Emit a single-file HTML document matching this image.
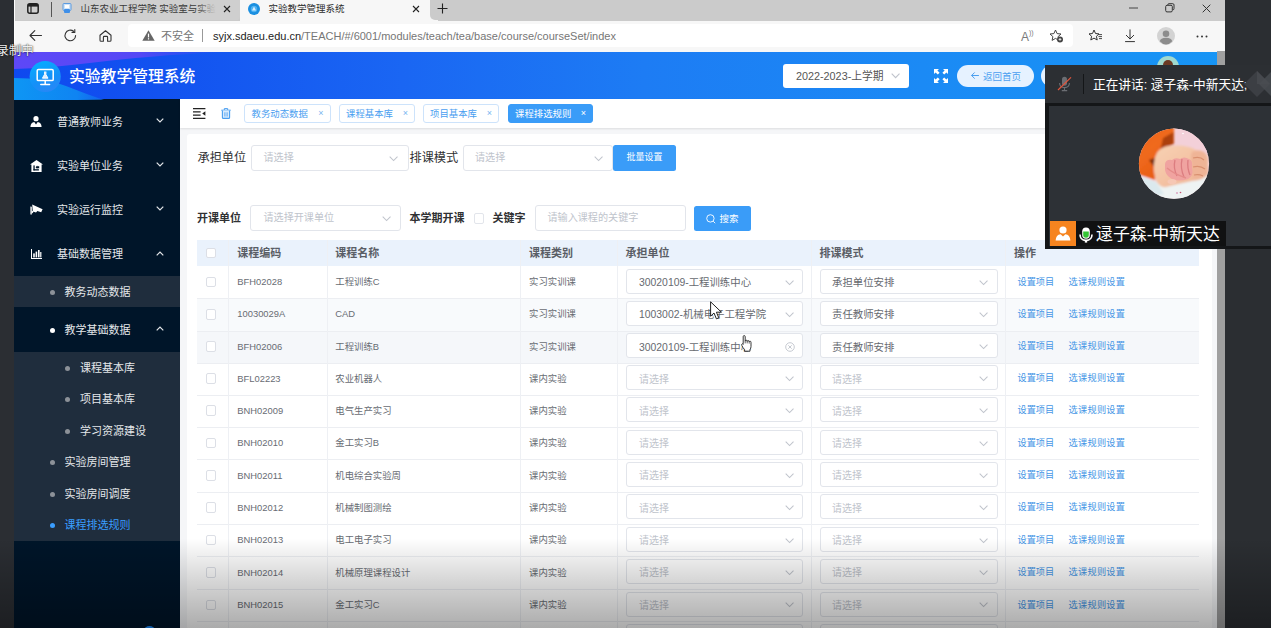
<!DOCTYPE html>
<html lang="zh-CN">
<head>
<meta charset="utf-8">
<title>实验教学管理系统</title>
<style>
*{box-sizing:border-box;margin:0;padding:0}
html,body{width:1271px;height:628px;overflow:hidden;background:#fff}
body{position:relative;font-family:"Liberation Sans","Noto Sans CJK SC",sans-serif;font-size:10px;color:#606266}
.abs{position:absolute}
#lstrip{left:0;top:0;width:14px;height:628px;background:#2b2b2d}
#rstrip{left:1225px;top:0;width:46px;height:628px;background:#2b2e32}
#tabbar{left:14px;top:0;width:1211px;height:20px;background:#cbcbcb}
#tab1{left:14px;top:0;width:225px;height:20px;background:#d4d4d4;border-radius:0 0 4px 0}
#tab2{left:239px;top:0;width:190.5px;height:21px;background:#f7f7f7;border-radius:4px 4px 0 0}
#addr{left:14px;top:20px;width:1211px;height:31px;background:#f7f7f7}
#url{left:128px;top:24px;width:945px;height:23px;background:#fff;border-radius:4px}
#hdr{left:14px;top:51px;width:1211px;height:48px;background:linear-gradient(90deg,#1f6cf6 0%,#1e78f4 45%,#1a8cf5 75%,#1795f5 100%)}
#side{left:14px;top:99px;width:166px;height:529px;background:#001529}
#main{left:180px;top:99px;width:1037px;height:529px;background:#f0f2f5}
#tabs{left:180px;top:99px;width:1037px;height:29px;background:#fff;box-shadow:0 1px 3px rgba(0,0,0,.12)}
#card{left:186px;top:133px;width:1025px;height:495px;background:#fff}
#scroll{left:1217px;top:51px;width:8px;height:577px;background:#a3a3a3}
#fade{left:0;top:538px;width:1271px;height:90px;background:linear-gradient(180deg,rgba(0,0,0,0) 0%,rgba(0,0,0,.17) 50%,rgba(0,0,0,.33) 100%);pointer-events:none}

.t{position:absolute;white-space:nowrap;line-height:1}
svg{position:absolute;overflow:visible}
#tabt1{left:80.5px;top:5px;font-size:9.5px;color:#3a3a3a;width:135px;overflow:hidden}
#tabt2{left:268.5px;top:5px;font-size:9.5px;color:#2a2a2a}
#unsafe{left:161px;top:30px;font-size:11px;color:#767676}
#urlt{left:213px;top:30px;font-size:11px;color:#767676}
#urlt b{font-weight:normal;color:#222}

#title{left:69px;top:67.5px;font-size:15.8px;color:#fff;font-weight:500;letter-spacing:0}
#sem{left:783px;top:63.5px;width:126px;height:24.5px;background:#fff;border-radius:3px}
#semt{left:796px;top:70px;font-size:10.5px;color:#555}
#back{left:957px;top:65px;width:77px;height:22px;border-radius:11px;background:#e6f2ff}
#backt{left:982px;top:71px;font-size:9.5px;color:#4a9ff0}
#pill2{left:1041px;top:65px;width:60px;height:22px;border-radius:11px;background:#e6f2ff}

#title{top:68.5px}
#hdr{background:linear-gradient(90deg,#1a58f2 0%,#1c6af4 30%,#1d7cf4 55%,#1a8cf5 78%,#1795f5 100%)}
.m{position:absolute;white-space:nowrap;line-height:1;font-size:11px;color:#e4e7ea;left:57px}
.m2{left:64.5px}.m3{left:80px}
.dot{position:absolute;width:4px;height:4px;border-radius:50%;background:#8c9198}
#sub1{left:14px;top:276px;width:166px;height:31px;background:#1f2d3d}
#sub2{left:14px;top:351.5px;width:166px;height:189px;background:#1f2d3d}

.dot{width:5px;height:5px;margin:-.2px 0 0 -.2px}
#tabs{top:98.5px;height:28.5px}
#card{left:186.5px;top:133.5px;border-radius:3px}
.tg{position:absolute;top:104.5px;height:18.5px;border:1px solid #cde3fb;border-radius:3px;background:#fff;font-size:9.4px;color:#4a9ef0;line-height:16.5px;padding-left:6.5px;white-space:nowrap}
.tg.on{background:#3a9cf8;border-color:#3a9cf8;color:#fff}
.tg i{position:absolute;right:6px;top:0;font-style:normal;font-size:9px;color:#7ab5f0}
.tg.on i{color:#fff}
.lb{position:absolute;white-space:nowrap;line-height:1;color:#303133}
.sel{position:absolute;border:1px solid #dcdfe6;border-radius:3px;background:#fff}
.ph{position:absolute;white-space:nowrap;line-height:1;color:#c0c4cc;font-size:10.1px;margin-top:-.3px}
.btn{position:absolute;background:#3a9cf8;border-radius:2.5px;color:#fff;font-size:9.5px;white-space:nowrap}

.sel{border-color:#e2e5eb}
#th{left:197px;top:239.5px;width:1002px;height:26.5px;background:#eaf2fc}
.row{position:absolute;left:197px;width:1002px;border-bottom:1px solid #ebeef5}
.vl{position:absolute;top:239.5px;width:1px;height:389px;background:#ebeef5}
.h{position:absolute;top:247px;white-space:nowrap;line-height:1;font-size:11px;font-weight:700;color:#5a5e66}
.c{position:absolute;white-space:nowrap;line-height:1;font-size:9.4px;color:#686c73}
.cb{position:absolute;left:205.5px;width:10.8px;height:10.8px;border:1px solid #dcdfe6;border-radius:2px;background:#fff}
.sv{margin-top:1.2px;position:absolute;white-space:nowrap;line-height:1;font-size:10.4px;color:#5c6066}
.lk{position:absolute;white-space:nowrap;line-height:1;font-size:9.2px;color:#4596e6}

#scroll{left:1217px;top:51px;width:8px;height:577px;background:#a0a0a0}
#mp{left:1045.3px;top:65px;width:226px;height:184px;background:#141618}
#mph{left:1045.3px;top:65px;width:226px;height:38px;background:#2c2f33}
#mpb{left:1049px;top:106.3px;width:222px;height:139.7px;background:#2d3136}
#mpt{left:1093px;top:79px;font-size:12.7px;color:#fff}
#nm{left:1050px;top:221px;width:175.5px;height:25px;background:#101112}
#nmo{left:1050px;top:221px;width:25.5px;height:25px;background:#f6841f}
#nmt{left:1096px;top:227px;font-size:16.9px;color:#fff}
#rec{left:-3px;top:45.5px;font-size:11.5px;color:#f2f2f2;text-shadow:0 0 2px rgba(0,0,0,.55)}

#hdr{top:51.5px;height:47.5px;background:linear-gradient(90deg,#0f49ef 0%,#1252f0 12%,#1a66f3 32%,#1d7cf4 52%,#1b8af5 75%,#1795f5 100%)}
#lstrip{background:#2b2e33;width:13.7px}
#rec{font-size:12px;left:-3.5px;top:45.5px;color:#ececec}
#wl{left:13.7px;top:0;width:1px;height:51px;background:#fdfdfd}

#tabt1,#tabt2{top:4px}
#unsafe,#urlt{top:31px}
#tab2{border-radius:0}
#tabr{left:429.5px;top:0;width:12px;height:20px;background:#cbcbcb;border-radius:0 0 0 5px}
#tabrb{left:429.5px;top:10px;width:8px;height:11px;background:#f7f7f7}

#tabbar{height:20.6px}#tab1{height:20.3px}#addr{top:20.6px;height:31px}
#semt{font-size:10.8px;top:70.8px}
#backt{left:983px;top:71.8px}
.row{border-bottom-color:#eef0f4}.vl{background:#eef0f4}

#main{background:#f5f6f8}
#tabs{height:29.5px;box-shadow:0 1px 2px rgba(0,0,0,.10)}

.h{top:248px}
.sv{color:#676a70}
.tg{top:104px;height:19px;line-height:17px}

#tab1{background:#cfcfcf;width:225.5px;border-radius:0 0 3px 0}
#tab2{left:239.5px;width:190px}

.row{border-bottom:none;border-top:1px solid #eceef2}

#th{height:26px}
.lk{margin-top:.5px}
.lk.l2{letter-spacing:.28px}

#rec{font-size:12.4px;left:-3.6px;top:45.4px;color:#f0f0f0;text-shadow:0 0 2px rgba(0,0,0,.75),0 0 1px rgba(0,0,0,.6)}
</style>
</head>
<body>
<div class="abs" id="tabbar"></div>
<div class="abs" id="tab1"></div>
<div class="abs" id="tab2"></div>
<div class="abs" id="addr"></div><div class="abs" id="tabrb"></div><div class="abs" id="tabr"></div>
<div class="abs" id="url"></div>
<div class="abs" id="hdr"></div>
<div class="abs" id="side"></div>
<div class="abs" id="main"></div>
<div class="abs" id="tabs"></div>
<div class="abs" id="card"></div>
<div class="abs" id="scroll"></div>

<!-- browser chrome -->
<svg style="left:27px;top:3px" width="12" height="11" viewBox="0 0 12 11"><rect x="0.8" y="0.8" width="10.4" height="9.4" rx="2" fill="none" stroke="#222" stroke-width="1.5"/><rect x="1" y="1" width="10" height="2.6" fill="#222"/><line x1="4" y1="3" x2="4" y2="10" stroke="#222" stroke-width="1.2"/></svg>
<div class="abs" style="left:51px;top:2px;width:1px;height:15px;background:#555"></div>
<svg style="left:62px;top:3px" width="10" height="11" viewBox="0 0 10 11"><rect x="1" y="0.5" width="8" height="7" rx="1" fill="#cfe3f7" stroke="#5b9be0" stroke-width="1"/><rect x="2" y="6" width="6" height="4" rx="1" fill="#3f8fe8"/><rect x="3" y="2" width="4" height="3" fill="#fff"/></svg>
<div class="t" id="tabt1">山东农业工程学院 实验室与实验</div>
<div class="abs" style="left:196px;top:2px;width:20px;height:16px;background:linear-gradient(90deg,rgba(207,207,207,0),#cfcfcf)"></div>
<svg style="left:223px;top:5px" width="8" height="8" viewBox="0 0 8 8"><path d="M1 1L7 7M7 1L1 7" stroke="#222" stroke-width="1.1" fill="none"/></svg>
<svg style="left:248px;top:3px" width="12" height="12" viewBox="0 0 12 12"><circle cx="6" cy="6" r="6" fill="#1b8fe0"/><circle cx="6" cy="6" r="3.2" fill="#4fb3f2"/><path d="M4 7.5L6 3.5L8 7.5Z" fill="#d9efff"/></svg>
<div class="t" id="tabt2">实验教学管理系统</div>
<svg style="left:412px;top:5px" width="8" height="8" viewBox="0 0 8 8"><path d="M1 1L7 7M7 1L1 7" stroke="#222" stroke-width="1.1" fill="none"/></svg>
<svg style="left:437px;top:3px" width="11" height="11" viewBox="0 0 11 11"><path d="M5.5 0.5V10.5M0.5 5.5H10.5" stroke="#222" stroke-width="1.1" fill="none"/></svg>
<!-- window buttons -->
<svg style="left:1129px;top:7px" width="10" height="2" viewBox="0 0 10 2"><path d="M0 1H9" stroke="#444" stroke-width="1"/></svg>
<svg style="left:1165px;top:3px" width="10" height="10" viewBox="0 0 10 10"><rect x="0.7" y="2.3" width="6.6" height="6.6" rx="1.3" fill="none" stroke="#333" stroke-width="1"/><path d="M2.8 2V1.8Q2.8 0.7 4 0.7H7.8Q9 0.7 9 1.9V5.6Q9 6.8 7.9 6.8" fill="none" stroke="#333" stroke-width="1"/></svg>
<svg style="left:1202px;top:4px" width="9" height="9" viewBox="0 0 9 9"><path d="M0.7 0.7L8.3 8.3M8.3 0.7L0.7 8.3" stroke="#333" stroke-width="1" fill="none"/></svg>
<!-- nav buttons -->
<svg style="left:29px;top:30.3px" width="13" height="11" viewBox="0 0 13 11"><path d="M12.5 5.5H1M5.8 0.7L1 5.5L5.8 10.3" stroke="#333" stroke-width="1.1" fill="none" stroke-linecap="round" stroke-linejoin="round"/></svg>
<svg style="left:64px;top:29px" width="13" height="13" viewBox="0 0 13 13"><path d="M11.6 6.5A5.3 5.3 0 1 1 9.6 2.3" stroke="#333" stroke-width="1.1" fill="none" stroke-linecap="round"/><path d="M10.8 0.6V3.4H8" stroke="#333" stroke-width="1.1" fill="none" stroke-linecap="round" stroke-linejoin="round"/></svg>
<svg style="left:99px;top:30px" width="13" height="12" viewBox="0 0 13 12"><path d="M1 5.2L6.5 0.7L12 5.2V10.2Q12 11.3 10.9 11.3H8.6V7.2Q8.6 6.4 7.8 6.4H5.2Q4.4 6.4 4.4 7.2V11.3H2.1Q1 11.3 1 10.2Z" stroke="#333" stroke-width="1.1" fill="none" stroke-linejoin="round"/></svg>
<svg style="left:142px;top:30px" width="13" height="11" viewBox="0 0 13 11"><path d="M6.5 0.3L12.7 10.7H0.3Z" fill="#666"/><rect x="5.9" y="3.6" width="1.2" height="3.8" fill="#fff"/><rect x="5.9" y="8.2" width="1.2" height="1.3" fill="#fff"/></svg>
<div class="t" id="unsafe">不安全</div>
<div class="abs" style="left:202px;top:29px;width:1px;height:13px;background:#999"></div>
<div class="t" id="urlt"><b>syjx.sdaeu.edu.cn</b>/TEACH/#/6001/modules/teach/tea/base/course/courseSet/index</div>
<!-- right addr icons -->
<div class="t" style="left:1021px;top:29px;font-size:12px;color:#7a7a7a">A<span style="font-size:7px;vertical-align:6px">))</span></div>
<svg style="left:1049px;top:29px" width="15" height="14" viewBox="0 0 15 14"><path d="M6.5 1L8.1 4.6L12 5L9.1 7.6L9.9 11.4L6.5 9.4L3.1 11.4L3.9 7.6L1 5L4.9 4.6Z" fill="none" stroke="#444" stroke-width="1" stroke-linejoin="round"/><circle cx="11" cy="10.4" r="3" fill="#444"/><path d="M9.6 10.4H12.4M11 9V11.8" stroke="#fff" stroke-width="0.8"/></svg>
<svg style="left:1088px;top:29px" width="15" height="13" viewBox="0 0 15 13"><path d="M6 1L7.5 4.5L11 4.9L8.4 7.3L9.2 11L6 9.1L2.8 11L3.6 7.3L1 4.9L4.5 4.5Z" fill="none" stroke="#333" stroke-width="1" stroke-linejoin="round"/><path d="M10.5 5.6H14M10.5 7.6H14M11 9.6H14" stroke="#333" stroke-width="0.9"/></svg>
<svg style="left:1125px;top:29px" width="10" height="14" viewBox="0 0 10 14"><path d="M5 0.8V9.8M1.3 6.3L5 10L8.7 6.3M0.5 12.6H9.5" fill="none" stroke="#333" stroke-width="1" stroke-linecap="round" stroke-linejoin="round"/></svg>
<svg style="left:1157px;top:27px" width="18" height="18" viewBox="0 0 18 18"><circle cx="9" cy="9" r="9" fill="#d3d3d3"/><circle cx="9" cy="6.7" r="3.3" fill="#8c8c8c"/><path d="M2.8 14.3Q3.4 10.8 9 10.8Q14.6 10.8 15.2 14.3Q12.7 17.4 9 17.4Q5.3 17.4 2.8 14.3Z" fill="#8c8c8c"/></svg>
<svg style="left:1196px;top:35px" width="12" height="3" viewBox="0 0 12 3"><circle cx="1.5" cy="1.5" r="1" fill="#333"/><circle cx="6" cy="1.5" r="1" fill="#333"/><circle cx="10.5" cy="1.5" r="1" fill="#333"/></svg>

<!-- app header -->
<svg style="left:14px;top:51.5px" width="300" height="48" viewBox="0 0 300 48">
<defs><linearGradient id="pg" x1="0" y1="0" x2="1" y2="0"><stop offset="0" stop-color="#5e48f7"/><stop offset="0.6" stop-color="#5548f5"/><stop offset="1" stop-color="#3a50f2" stop-opacity="0"/></linearGradient>
<linearGradient id="lg" x1="0" y1="0" x2="1" y2="0"><stop offset="0" stop-color="#0e96f4"/><stop offset="0.7" stop-color="#0f84f2"/><stop offset="1" stop-color="#1270f0" stop-opacity="0.6"/></linearGradient>
<linearGradient id="cg" x1="0.3" y1="0" x2="0.7" y2="1"><stop offset="0" stop-color="#06acff"/><stop offset="0.6" stop-color="#1590f8"/><stop offset="1" stop-color="#2a86f6"/></linearGradient></defs>
<path d="M0 0H210Q130 4 80 10.5Q35 16 0 17Z" fill="url(#pg)"/>
<path d="M0 26Q30 26 52 34Q72 42 90 48H0Z" fill="url(#lg)"/>
<circle cx="31.2" cy="24.5" r="15.6" fill="url(#cg)"/>
<rect x="23.2" y="17.6" width="16" height="11" rx="1.2" fill="none" stroke="#fff" stroke-width="1.5"/>
<path d="M31.2 28.6V31.8M26.8 32.4H35.6" stroke="#fff" stroke-width="1.5" fill="none" stroke-linecap="round"/>
<path d="M30 20H32.4M30.5 20.2V22.4L28.4 26.2H34L31.9 22.4V20.2" stroke="#fff" stroke-width="0.9" fill="#dff0ff" stroke-linejoin="round"/>
</svg>
<div class="t" id="title">实验教学管理系统</div>
<div class="abs" id="sem"></div>
<div class="t" id="semt">2022-2023-上学期</div>
<svg style="left:891.4px;top:72.7px" width="9.2" height="5.75" viewBox="0 0 8 5"><path d="M0.6 0.6L4 4L7.4 0.6" stroke="#c0c4cc" stroke-width="1" fill="none"/></svg>
<svg style="left:934px;top:69px" width="14" height="14" viewBox="0 0 14 14" fill="#fff"><path d="M0 0H5L3.4 1.6L5.6 3.8L3.8 5.6L1.6 3.4L0 5Z"/><path d="M14 0V5L12.4 3.4L10.2 5.6L8.4 3.8L10.6 1.6L9 0Z"/><path d="M0 14V9L1.6 10.6L3.8 8.4L5.6 10.2L3.4 12.4L5 14Z"/><path d="M14 14H9L10.6 12.4L8.4 10.2L10.2 8.4L12.4 10.6L14 9Z"/></svg>
<div class="abs" id="back"></div>
<svg style="left:971px;top:72px" width="8" height="7" viewBox="0 0 8 7"><path d="M7.5 3.5H0.8M3.4 0.7L0.6 3.5L3.4 6.3" stroke="#4a9ff0" stroke-width="1" fill="none" stroke-linecap="round" stroke-linejoin="round"/></svg>
<div class="t" id="backt">返回首页</div>
<div class="abs" id="pill2"></div>
<svg style="left:1157px;top:56px" width="22" height="22" viewBox="0 0 22 22"><circle cx="11" cy="11" r="11" fill="#9fd9cf"/><circle cx="11" cy="9" r="5" fill="#6b3a24"/><path d="M3 18Q5 13 11 13Q17 13 19 18Q16 22 11 22Q6 22 3 18Z" fill="#fff"/></svg>

<!-- sidebar -->
<div class="abs" id="sub1"></div>
<div class="abs" id="sub2"></div>
<svg style="left:29.5px;top:116px" width="12" height="11" viewBox="0 0 12 11" fill="#fff"><circle cx="6" cy="2.7" r="2.6"/><path d="M0.4 11Q0.6 6.3 4.3 5.9L6 8.6L7.7 5.9Q11.4 6.3 11.6 11Z"/></svg>
<div class="m" style="top:116.5px">普通教师业务</div>
<svg style="left:155.5px;top:117.5px" width="8" height="5" viewBox="0 0 8 5"><path d="M0.7 0.7L4 4L7.3 0.7" stroke="#e4e7ea" stroke-width="1.2" fill="none"/></svg>
<svg style="left:29.5px;top:160px" width="13" height="12" viewBox="0 0 13 12" fill="#fff"><path d="M6.5 0L13 4.6H11.6V12H1.4V4.6H0Z"/><rect x="3.4" y="5.4" width="1.3" height="5" fill="#001529"/><rect x="3.4" y="9.2" width="5.5" height="1.3" fill="#001529"/><path d="M9.2 6.2V8.2H7.2L7.2 9L5.6 7.2L7.2 5.4V6.2Z" fill="#001529"/></svg>
<div class="m" style="top:160.5px">实验单位业务</div>
<svg style="left:155.5px;top:161.5px" width="8" height="5" viewBox="0 0 8 5"><path d="M0.7 0.7L4 4L7.3 0.7" stroke="#e4e7ea" stroke-width="1.2" fill="none"/></svg>
<svg style="left:29.5px;top:204px" width="13" height="11" viewBox="0 0 13 11" fill="#fff"><path d="M2.2 0.4L12.6 5.2L11.2 8.2L7.4 6.9L6 8.6L2.8 7.4Z"/><path d="M0.4 2.4L1.8 2.8V10.6H0.4Z"/><path d="M1.6 6.6L3.6 7.6L2.6 9.2L1.6 9Z"/></svg>
<div class="m" style="top:204.5px">实验运行监控</div>
<svg style="left:155.5px;top:205.5px" width="8" height="5" viewBox="0 0 8 5"><path d="M0.7 0.7L4 4L7.3 0.7" stroke="#e4e7ea" stroke-width="1.2" fill="none"/></svg>
<svg style="left:30.5px;top:249px" width="11" height="10" viewBox="0 0 11 10" fill="#fff"><rect x="0" y="0" width="1" height="10"/><rect x="0" y="9" width="11" height="1"/><rect x="2.2" y="4.4" width="1.6" height="4"/><rect x="4.6" y="2.6" width="1.6" height="5.8"/><rect x="7" y="1" width="1.6" height="7.4"/><rect x="9.2" y="3" width="1.2" height="5.4"/></svg>
<div class="m" style="top:248.5px">基础数据管理</div>
<svg style="left:155.5px;top:250.5px" width="8" height="5" viewBox="0 0 8 5"><path d="M0.7 4.3L4 1L7.3 4.3" stroke="#e4e7ea" stroke-width="1.2" fill="none"/></svg>
<div class="dot" style="left:50px;top:290px"></div>
<div class="m m2" style="top:286.5px">教务动态数据</div>
<div class="dot" style="left:50px;top:328px;background:#fff"></div>
<div class="m m2" style="top:325px">教学基础数据</div>
<svg style="left:155.5px;top:325.5px" width="8" height="5" viewBox="0 0 8 5"><path d="M0.7 4.3L4 1L7.3 4.3" stroke="#e4e7ea" stroke-width="1.2" fill="none"/></svg>
<div class="dot" style="left:65.5px;top:366px"></div>
<div class="m m3" style="top:362.5px">课程基本库</div>
<div class="dot" style="left:65.5px;top:397.5px"></div>
<div class="m m3" style="top:394px">项目基本库</div>
<div class="dot" style="left:65.5px;top:429px"></div>
<div class="m m3" style="top:425.5px">学习资源建设</div>
<div class="dot" style="left:50px;top:460.5px"></div>
<div class="m m2" style="top:457px">实验房间管理</div>
<div class="dot" style="left:50px;top:492px"></div>
<div class="m m2" style="top:488.5px">实验房间调度</div>
<div class="dot" style="left:50px;top:523.5px;background:#3a9eff"></div>
<div class="m m2" style="top:520px;color:#3a9eff">课程排选规则</div>
<div class="abs" style="left:144px;top:625.5px;width:11px;height:8px;border-radius:50%;background:#1e8fff"></div>

<!-- tag tabs -->
<svg style="left:193px;top:108px" width="13" height="11" viewBox="0 0 13 11"><path d="M0 0.6H12.4M0 3.9H7.6M0 7.1H7.6M0 10.4H12.4" stroke="#222" stroke-width="1.1"/><path d="M12.4 3.2V7.8L9.2 5.5Z" fill="#222"/></svg>
<svg style="left:220.5px;top:108px" width="10" height="11" viewBox="0 0 10 11"><path d="M0.3 2.2H9.7M3.3 2V0.6H6.7V2" stroke="#4a9ef0" stroke-width="1" fill="none"/><path d="M1.4 2.4V9.4Q1.4 10.4 2.4 10.4H7.6Q8.6 10.4 8.6 9.4V2.4" stroke="#4a9ef0" stroke-width="1.1" fill="#d9ebfd"/><path d="M3.9 4.3V8.5M6.1 4.3V8.5" stroke="#4a9ef0" stroke-width="0.9"/></svg>
<div class="tg" style="left:244px;width:86.5px">教务动态数据<i>×</i></div>
<div class="tg" style="left:338.5px;width:76.5px">课程基本库<i>×</i></div>
<div class="tg" style="left:422.5px;width:76.5px">项目基本库<i>×</i></div>
<div class="tg on" style="left:507.5px;width:85.5px">课程排选规则<i>×</i></div>
<!-- filter row 1 -->
<div class="lb" style="left:197.5px;top:151.5px;font-size:12.2px">承担单位</div>
<div class="sel" style="left:251px;top:145px;width:157.5px;height:25.5px"></div>
<div class="ph" style="left:263.5px;top:153.5px">请选择</div>
<svg style="left:388.9px;top:155.7px" width="9.2" height="5.75" viewBox="0 0 8 5"><path d="M0.6 0.6L4 4L7.4 0.6" stroke="#c0c4cc" stroke-width="0.9" fill="none"/></svg>
<div class="lb" style="left:409.5px;top:151.5px;font-size:12.2px">排课模式</div>
<div class="sel" style="left:462.5px;top:145px;width:150px;height:25.5px"></div>
<div class="ph" style="left:475px;top:153.5px">请选择</div>
<svg style="left:594.4px;top:155.7px" width="9.2" height="5.75" viewBox="0 0 8 5"><path d="M0.6 0.6L4 4L7.4 0.6" stroke="#c0c4cc" stroke-width="0.9" fill="none"/></svg>
<div class="btn" style="left:613px;top:145px;width:63px;height:25.5px;line-height:25.5px;text-align:center;font-size:9px">批量设置</div>
<!-- filter row 2 -->
<div class="lb" style="left:197px;top:212.5px;font-size:11px;font-weight:700">开课单位</div>
<div class="sel" style="left:250px;top:205px;width:151px;height:26px"></div>
<div class="ph" style="left:263.5px;top:213.5px">请选择开课单位</div>
<svg style="left:382.4px;top:216.2px" width="9.2" height="5.75" viewBox="0 0 8 5"><path d="M0.6 0.6L4 4L7.4 0.6" stroke="#c0c4cc" stroke-width="0.9" fill="none"/></svg>
<div class="lb" style="left:409.5px;top:212.5px;font-size:11px;font-weight:700">本学期开课</div>
<div class="sel" style="left:473.5px;top:213px;width:10.5px;height:10.5px;border-radius:2px"></div>
<div class="lb" style="left:492.5px;top:212.5px;font-size:11px;font-weight:700">关键字</div>
<div class="sel" style="left:535px;top:205px;width:150.5px;height:26px"></div>
<div class="ph" style="left:547.5px;top:213.5px">请输入课程的关键字</div>
<div class="btn" style="left:693.5px;top:206px;width:57.5px;height:25px"></div>
<svg style="left:706px;top:213.5px" width="10" height="10" viewBox="0 0 10 10"><circle cx="4.4" cy="4.4" r="3.7" fill="none" stroke="#fff" stroke-width="0.9"/><path d="M7.2 7.2L9.2 9.2" stroke="#fff" stroke-width="0.9"/></svg>
<div class="lb" style="left:719.5px;top:213.5px;font-size:9.5px;color:#fff">搜索</div>
<!-- table -->
<div class="abs" id="th"></div>
<div class="row" style="top:265.8px;height:32.4px;background:#fff;border-top:none"></div>
<div class="row" style="top:298.2px;height:32.4px;background:#f8fafc"></div>
<div class="row" style="top:330.6px;height:32.1px;background:#f5f7fa"></div>
<div class="row" style="top:362.7px;height:32.0px;background:#fff"></div>
<div class="row" style="top:394.7px;height:32.3px;background:#fff"></div>
<div class="row" style="top:427px;height:32.3px;background:#fff"></div>
<div class="row" style="top:459.3px;height:32.3px;background:#fff"></div>
<div class="row" style="top:491.6px;height:32.4px;background:#fff"></div>
<div class="row" style="top:524px;height:32.3px;background:#fff"></div>
<div class="row" style="top:556.3px;height:32.5px;background:#fff"></div>
<div class="row" style="top:588.8px;height:32.2px;background:#fff"></div>
<div class="row" style="top:621px;height:32.4px;background:#fff"></div>
<div class="vl" style="left:228px"></div>
<div class="vl" style="left:327px"></div>
<div class="vl" style="left:520px"></div>
<div class="vl" style="left:617px"></div>
<div class="vl" style="left:811px"></div>
<div class="vl" style="left:1005px"></div>
<div class="cb" style="top:247.5px"></div>
<div class="h" style="left:237.3px">课程编码</div>
<div class="h" style="left:335.3px">课程名称</div>
<div class="h" style="left:529px">课程类别</div>
<div class="h" style="left:625.5px">承担单位</div>
<div class="h" style="left:819.5px">排课模式</div>
<div class="h" style="left:1014px">操作</div>
<div class="cb" style="top:276.7px"></div>
<div class="c" style="left:237.3px;top:277.2px">BFH02028</div>
<div class="c" style="left:335.3px;top:277.2px">工程训练C</div>
<div class="c" style="left:529px;top:277.2px">实习实训课</div>
<div class="sel" style="left:626px;top:268.7px;width:176.5px;height:25px"></div>
<div class="sel" style="left:820px;top:268.7px;width:177.5px;height:25px"></div>
<div class="sv" style="left:639px;top:276.9px">30020109-工程训练中心</div>
<div class="sv" style="left:832px;top:276.9px">承担单位安排</div>
<svg style="left:784.9px;top:279.5px" width="9.2" height="5.75" viewBox="0 0 8 5"><path d="M0.6 0.6L4 4L7.4 0.6" stroke="#c0c4cc" stroke-width="0.9" fill="none"/></svg>
<svg style="left:978.9px;top:279.5px" width="9.2" height="5.75" viewBox="0 0 8 5"><path d="M0.6 0.6L4 4L7.4 0.6" stroke="#c0c4cc" stroke-width="0.9" fill="none"/></svg>
<div class="lk" style="left:1017.5px;top:277.2px">设置项目</div>
<div class="lk l2" style="left:1068.5px;top:277.2px">选课规则设置</div>
<div class="cb" style="top:308.9px"></div>
<div class="c" style="left:237.3px;top:309.4px">10030029A</div>
<div class="c" style="left:335.3px;top:309.4px">CAD</div>
<div class="c" style="left:529px;top:309.4px">实习实训课</div>
<div class="sel" style="left:626px;top:300.9px;width:176.5px;height:25px"></div>
<div class="sel" style="left:820px;top:300.9px;width:177.5px;height:25px"></div>
<div class="sv" style="left:639px;top:309.1px">1003002-机械电子工程学院</div>
<div class="sv" style="left:832px;top:309.1px">责任教师安排</div>
<svg style="left:784.9px;top:311.7px" width="9.2" height="5.75" viewBox="0 0 8 5"><path d="M0.6 0.6L4 4L7.4 0.6" stroke="#c0c4cc" stroke-width="0.9" fill="none"/></svg>
<svg style="left:978.9px;top:311.7px" width="9.2" height="5.75" viewBox="0 0 8 5"><path d="M0.6 0.6L4 4L7.4 0.6" stroke="#c0c4cc" stroke-width="0.9" fill="none"/></svg>
<div class="lk" style="left:1017.5px;top:309.4px">设置项目</div>
<div class="lk l2" style="left:1068.5px;top:309.4px">选课规则设置</div>
<div class="cb" style="top:341.3px"></div>
<div class="c" style="left:237.3px;top:341.8px">BFH02006</div>
<div class="c" style="left:335.3px;top:341.8px">工程训练B</div>
<div class="c" style="left:529px;top:341.8px">实习实训课</div>
<div class="sel" style="left:626px;top:333.3px;width:176.5px;height:25px"></div>
<div class="sel" style="left:820px;top:333.3px;width:177.5px;height:25px"></div>
<div class="sv" style="left:639px;top:341.5px">30020109-工程训练中心</div>
<div class="sv" style="left:832px;top:341.5px">责任教师安排</div>
<svg style="left:784.5px;top:341.7px" width="10" height="10" viewBox="0 0 10 10"><circle cx="5" cy="5" r="4.3" fill="none" stroke="#c0c4cc" stroke-width="0.9"/><path d="M3.3 3.3L6.7 6.7M6.7 3.3L3.3 6.7" stroke="#c0c4cc" stroke-width="0.9"/></svg>
<svg style="left:978.9px;top:344.1px" width="9.2" height="5.75" viewBox="0 0 8 5"><path d="M0.6 0.6L4 4L7.4 0.6" stroke="#c0c4cc" stroke-width="0.9" fill="none"/></svg>
<div class="lk" style="left:1017.5px;top:341.8px">设置项目</div>
<div class="lk l2" style="left:1068.5px;top:341.8px">选课规则设置</div>
<div class="cb" style="top:373.4px"></div>
<div class="c" style="left:237.3px;top:373.9px">BFL02223</div>
<div class="c" style="left:335.3px;top:373.9px">农业机器人</div>
<div class="c" style="left:529px;top:373.9px">课内实验</div>
<div class="sel" style="left:626px;top:365.4px;width:176.5px;height:25px"></div>
<div class="sel" style="left:820px;top:365.4px;width:177.5px;height:25px"></div>
<div class="ph" style="left:639px;top:373.6px;font-size:10px;margin-top:1.2px">请选择</div>
<div class="ph" style="left:832px;top:373.6px;font-size:10px;margin-top:1.2px">请选择</div>
<svg style="left:784.9px;top:376.2px" width="9.2" height="5.75" viewBox="0 0 8 5"><path d="M0.6 0.6L4 4L7.4 0.6" stroke="#c0c4cc" stroke-width="0.9" fill="none"/></svg>
<svg style="left:978.9px;top:376.2px" width="9.2" height="5.75" viewBox="0 0 8 5"><path d="M0.6 0.6L4 4L7.4 0.6" stroke="#c0c4cc" stroke-width="0.9" fill="none"/></svg>
<div class="lk" style="left:1017.5px;top:373.9px">设置项目</div>
<div class="lk l2" style="left:1068.5px;top:373.9px">选课规则设置</div>
<div class="cb" style="top:405.4px"></div>
<div class="c" style="left:237.3px;top:405.9px">BNH02009</div>
<div class="c" style="left:335.3px;top:405.9px">电气生产实习</div>
<div class="c" style="left:529px;top:405.9px">课内实验</div>
<div class="sel" style="left:626px;top:397.4px;width:176.5px;height:25px"></div>
<div class="sel" style="left:820px;top:397.4px;width:177.5px;height:25px"></div>
<div class="ph" style="left:639px;top:405.6px;font-size:10px;margin-top:1.2px">请选择</div>
<div class="ph" style="left:832px;top:405.6px;font-size:10px;margin-top:1.2px">请选择</div>
<svg style="left:784.9px;top:408.2px" width="9.2" height="5.75" viewBox="0 0 8 5"><path d="M0.6 0.6L4 4L7.4 0.6" stroke="#c0c4cc" stroke-width="0.9" fill="none"/></svg>
<svg style="left:978.9px;top:408.2px" width="9.2" height="5.75" viewBox="0 0 8 5"><path d="M0.6 0.6L4 4L7.4 0.6" stroke="#c0c4cc" stroke-width="0.9" fill="none"/></svg>
<div class="lk" style="left:1017.5px;top:405.9px">设置项目</div>
<div class="lk l2" style="left:1068.5px;top:405.9px">选课规则设置</div>
<div class="cb" style="top:437.7px"></div>
<div class="c" style="left:237.3px;top:438.2px">BNH02010</div>
<div class="c" style="left:335.3px;top:438.2px">金工实习B</div>
<div class="c" style="left:529px;top:438.2px">课内实验</div>
<div class="sel" style="left:626px;top:429.7px;width:176.5px;height:25px"></div>
<div class="sel" style="left:820px;top:429.7px;width:177.5px;height:25px"></div>
<div class="ph" style="left:639px;top:437.9px;font-size:10px;margin-top:1.2px">请选择</div>
<div class="ph" style="left:832px;top:437.9px;font-size:10px;margin-top:1.2px">请选择</div>
<svg style="left:784.9px;top:440.5px" width="9.2" height="5.75" viewBox="0 0 8 5"><path d="M0.6 0.6L4 4L7.4 0.6" stroke="#c0c4cc" stroke-width="0.9" fill="none"/></svg>
<svg style="left:978.9px;top:440.5px" width="9.2" height="5.75" viewBox="0 0 8 5"><path d="M0.6 0.6L4 4L7.4 0.6" stroke="#c0c4cc" stroke-width="0.9" fill="none"/></svg>
<div class="lk" style="left:1017.5px;top:438.2px">设置项目</div>
<div class="lk l2" style="left:1068.5px;top:438.2px">选课规则设置</div>
<div class="cb" style="top:470.0px"></div>
<div class="c" style="left:237.3px;top:470.5px">BNH02011</div>
<div class="c" style="left:335.3px;top:470.5px">机电综合实验周</div>
<div class="c" style="left:529px;top:470.5px">课内实验</div>
<div class="sel" style="left:626px;top:462.0px;width:176.5px;height:25px"></div>
<div class="sel" style="left:820px;top:462.0px;width:177.5px;height:25px"></div>
<div class="ph" style="left:639px;top:470.2px;font-size:10px;margin-top:1.2px">请选择</div>
<div class="ph" style="left:832px;top:470.2px;font-size:10px;margin-top:1.2px">请选择</div>
<svg style="left:784.9px;top:472.8px" width="9.2" height="5.75" viewBox="0 0 8 5"><path d="M0.6 0.6L4 4L7.4 0.6" stroke="#c0c4cc" stroke-width="0.9" fill="none"/></svg>
<svg style="left:978.9px;top:472.8px" width="9.2" height="5.75" viewBox="0 0 8 5"><path d="M0.6 0.6L4 4L7.4 0.6" stroke="#c0c4cc" stroke-width="0.9" fill="none"/></svg>
<div class="lk" style="left:1017.5px;top:470.5px">设置项目</div>
<div class="lk l2" style="left:1068.5px;top:470.5px">选课规则设置</div>
<div class="cb" style="top:502.3px"></div>
<div class="c" style="left:237.3px;top:502.8px">BNH02012</div>
<div class="c" style="left:335.3px;top:502.8px">机械制图测绘</div>
<div class="c" style="left:529px;top:502.8px">课内实验</div>
<div class="sel" style="left:626px;top:494.3px;width:176.5px;height:25px"></div>
<div class="sel" style="left:820px;top:494.3px;width:177.5px;height:25px"></div>
<div class="ph" style="left:639px;top:502.5px;font-size:10px;margin-top:1.2px">请选择</div>
<div class="ph" style="left:832px;top:502.5px;font-size:10px;margin-top:1.2px">请选择</div>
<svg style="left:784.9px;top:505.1px" width="9.2" height="5.75" viewBox="0 0 8 5"><path d="M0.6 0.6L4 4L7.4 0.6" stroke="#c0c4cc" stroke-width="0.9" fill="none"/></svg>
<svg style="left:978.9px;top:505.1px" width="9.2" height="5.75" viewBox="0 0 8 5"><path d="M0.6 0.6L4 4L7.4 0.6" stroke="#c0c4cc" stroke-width="0.9" fill="none"/></svg>
<div class="lk" style="left:1017.5px;top:502.8px">设置项目</div>
<div class="lk l2" style="left:1068.5px;top:502.8px">选课规则设置</div>
<div class="cb" style="top:534.7px"></div>
<div class="c" style="left:237.3px;top:535.2px">BNH02013</div>
<div class="c" style="left:335.3px;top:535.2px">电工电子实习</div>
<div class="c" style="left:529px;top:535.2px">课内实验</div>
<div class="sel" style="left:626px;top:526.7px;width:176.5px;height:25px"></div>
<div class="sel" style="left:820px;top:526.7px;width:177.5px;height:25px"></div>
<div class="ph" style="left:639px;top:534.9px;font-size:10px;margin-top:1.2px">请选择</div>
<div class="ph" style="left:832px;top:534.9px;font-size:10px;margin-top:1.2px">请选择</div>
<svg style="left:784.9px;top:537.5px" width="9.2" height="5.75" viewBox="0 0 8 5"><path d="M0.6 0.6L4 4L7.4 0.6" stroke="#c0c4cc" stroke-width="0.9" fill="none"/></svg>
<svg style="left:978.9px;top:537.5px" width="9.2" height="5.75" viewBox="0 0 8 5"><path d="M0.6 0.6L4 4L7.4 0.6" stroke="#c0c4cc" stroke-width="0.9" fill="none"/></svg>
<div class="lk" style="left:1017.5px;top:535.2px">设置项目</div>
<div class="lk l2" style="left:1068.5px;top:535.2px">选课规则设置</div>
<div class="cb" style="top:567.0px"></div>
<div class="c" style="left:237.3px;top:567.5px">BNH02014</div>
<div class="c" style="left:335.3px;top:567.5px">机械原理课程设计</div>
<div class="c" style="left:529px;top:567.5px">课内实验</div>
<div class="sel" style="left:626px;top:559.0px;width:176.5px;height:25px"></div>
<div class="sel" style="left:820px;top:559.0px;width:177.5px;height:25px"></div>
<div class="ph" style="left:639px;top:567.2px;font-size:10px;margin-top:1.2px">请选择</div>
<div class="ph" style="left:832px;top:567.2px;font-size:10px;margin-top:1.2px">请选择</div>
<svg style="left:784.9px;top:569.8px" width="9.2" height="5.75" viewBox="0 0 8 5"><path d="M0.6 0.6L4 4L7.4 0.6" stroke="#c0c4cc" stroke-width="0.9" fill="none"/></svg>
<svg style="left:978.9px;top:569.8px" width="9.2" height="5.75" viewBox="0 0 8 5"><path d="M0.6 0.6L4 4L7.4 0.6" stroke="#c0c4cc" stroke-width="0.9" fill="none"/></svg>
<div class="lk" style="left:1017.5px;top:567.5px">设置项目</div>
<div class="lk l2" style="left:1068.5px;top:567.5px">选课规则设置</div>
<div class="cb" style="top:599.5px"></div>
<div class="c" style="left:237.3px;top:600.0px">BNH02015</div>
<div class="c" style="left:335.3px;top:600.0px">金工实习C</div>
<div class="c" style="left:529px;top:600.0px">课内实验</div>
<div class="sel" style="left:626px;top:591.5px;width:176.5px;height:25px"></div>
<div class="sel" style="left:820px;top:591.5px;width:177.5px;height:25px"></div>
<div class="ph" style="left:639px;top:599.7px;font-size:10px;margin-top:1.2px">请选择</div>
<div class="ph" style="left:832px;top:599.7px;font-size:10px;margin-top:1.2px">请选择</div>
<svg style="left:784.9px;top:602.3px" width="9.2" height="5.75" viewBox="0 0 8 5"><path d="M0.6 0.6L4 4L7.4 0.6" stroke="#c0c4cc" stroke-width="0.9" fill="none"/></svg>
<svg style="left:978.9px;top:602.3px" width="9.2" height="5.75" viewBox="0 0 8 5"><path d="M0.6 0.6L4 4L7.4 0.6" stroke="#c0c4cc" stroke-width="0.9" fill="none"/></svg>
<div class="lk" style="left:1017.5px;top:600.0px">设置项目</div>
<div class="lk l2" style="left:1068.5px;top:600.0px">选课规则设置</div>
<div class="cb" style="top:631.7px"></div>
<div class="c" style="left:237.3px;top:632.2px">BNH02016</div>
<div class="sel" style="left:626px;top:623.6px;width:176.5px;height:25px"></div>
<div class="sel" style="left:820px;top:623.6px;width:177.5px;height:25px"></div>
<!-- cursors -->
<svg style="left:710px;top:301px" width="13" height="19" viewBox="0 0 13 19"><path d="M0.6 0.8V15.2L4 12L6.4 17.8L8.8 16.8L6.4 11.2H11.4Z" fill="#fff" stroke="#222" stroke-width="1" stroke-linejoin="round"/></svg>
<svg style="left:740.5px;top:334.5px" width="11" height="17" viewBox="0 0 11 17"><path d="M2.2 8.6V1.6Q2.2 0.6 3.2 0.6Q4.2 0.6 4.2 1.6V6.2Q4.2 5.2 5.2 5.2Q6.2 5.2 6.2 6.4Q6.2 5.6 7.2 5.6Q8.2 5.6 8.2 6.8Q8.2 6.2 9.1 6.2Q10 6.2 10 7.4V11.4Q10 13.4 9 14.4V16.2H3.6V14.6Q1.6 12.4 0.8 10.4Q0.4 9.2 1.2 8.8Q1.8 8.4 2.2 9.4Z" fill="#fff" stroke="#222" stroke-width="0.9" stroke-linejoin="round"/><path d="M4.2 6.2V8.4M6.2 6.4V8.4M8.2 6.8V8.6" stroke="#222" stroke-width="0.7"/></svg>


<!--OVERLAYS-->
<div class="abs" id="lstrip"></div><div class="abs" id="wl"></div>
<div class="abs" id="rstrip"></div>
<div class="abs" id="fade"></div>
<!-- meeting overlay -->
<div class="abs" id="mp"></div>
<div class="abs" id="mph"></div>
<div class="abs" id="mpb"></div>
<svg style="left:1057px;top:76px" width="15" height="16" viewBox="0 0 15 16"><rect x="5" y="0.8" width="5" height="9" rx="2.5" fill="#6b6e73"/><path d="M2.6 7Q2.6 11.6 7.5 11.6Q12.4 11.6 12.4 7M7.5 11.6V14.4M4.8 14.6H10.2" stroke="#6b6e73" stroke-width="1.1" fill="none"/><path d="M1 14L14 1.4" stroke="#e2553c" stroke-width="1.2"/></svg>
<div class="abs" style="left:1083px;top:74px;width:1.2px;height:20px;background:#141618"></div>
<div class="t" id="mpt">正在讲话: 逯子森-中新天达;</div>
<svg style="left:1243px;top:70px" width="28" height="28" viewBox="0 0 28 28"><path d="M14 1L27 14L14 27L1 14Z" fill="#3c3f44"/><path d="M14 1L27 14H14Z" fill="#46494e"/><path d="M29 1L42 14L29 27L16 14Z" fill="#4a4d52" opacity="0.8"/></svg>
<svg style="left:1134px;top:124px" width="80" height="80" viewBox="0 0 80 80">
<defs><clipPath id="av"><circle cx="40" cy="39.7" r="35.1"/></clipPath>
<filter id="bl" x="-20%" y="-20%" width="140%" height="140%"><feGaussianBlur stdDeviation="1.1"/></filter>
<filter id="bl2" x="-20%" y="-20%" width="140%" height="140%"><feGaussianBlur stdDeviation="0.7"/></filter>
<linearGradient id="org" x1="0" y1="0" x2="0.6" y2="1"><stop offset="0" stop-color="#e8601a"/><stop offset="0.5" stop-color="#f06a1c"/><stop offset="1" stop-color="#e55a14"/></linearGradient>
<linearGradient id="skin" x1="0" y1="0" x2="1" y2="1"><stop offset="0" stop-color="#f7d2b4"/><stop offset="0.5" stop-color="#f4c3a4"/><stop offset="1" stop-color="#eeb092"/></linearGradient></defs>
<g clip-path="url(#av)">
<rect width="80" height="80" fill="#f4d6dc"/>
<rect x="39" y="0" width="41" height="30" fill="#f3d0d9"/>
<g filter="url(#bl)">
<path d="M0 50Q20 56 30 62Q50 60 76 50V80H0Z" fill="#eef3f3"/>
<path d="M0 50L22 58L30 70L10 74Z" fill="#dbe9ee"/>
<path d="M0 0H40V20L30 24L22 36L21 56L6 51L0 52Z" fill="url(#org)"/>
<path d="M29 14L39.5 8V20L31 23L26 28Z" fill="#a03a0a" opacity="0.85"/>
<path d="M15 36L21 34L21 44Z" fill="#7a2c08"/>
<path d="M20 40Q21 24 34 22Q52 20 62 26Q72 26 74 34V50Q70 56 58 57Q44 60 36 62Q26 66 22 56Q19 48 20 40Z" fill="url(#skin)"/>
<path d="M58 28Q66 25 71 29Q74 34 72 42Q74 48 70 53Q64 57 59 53Q56 46 58 40Q56 33 58 28Z" fill="#efb496"/>
</g>
<g filter="url(#bl2)">
<path d="M31 40Q32 35 38 36Q41 33 46 35Q50 32 55 35Q59 36 58 44Q60 52 54 55Q44 58 38 55Q32 52 31 46Z" fill="#f0a3a0"/>
<path d="M41 36Q39 44 43 52M48 35Q46 44 50 53M54 36Q53 44 56 51" stroke="#dc7d80" stroke-width="1.3" fill="none"/>
<path d="M33 44Q40 50 52 54" stroke="#e58c8a" stroke-width="1.5" fill="none"/>
<path d="M59 34Q66 32 70 36M59 43Q66 41 71 45M60 51Q65 50 69 52" stroke="#d99070" stroke-width="1.2" fill="none"/>
<ellipse cx="38" cy="57.5" rx="4.5" ry="2.6" fill="#f6c7b4"/>
</g>
<circle cx="49" cy="9.5" r="0.8" fill="#fff"/>
<circle cx="43" cy="69" r="0.8" fill="#d070a0"/><circle cx="46.5" cy="68.5" r="0.8" fill="#c85070"/>
</g></svg>
<div class="abs" id="nm"></div>
<div class="abs" id="nmo"></div>
<svg style="left:1055px;top:226px" width="16" height="15" viewBox="0 0 16 15" fill="#fff"><circle cx="8" cy="4" r="3.6"/><path d="M0.6 14.6Q1 8.6 5.6 8.2L8 10.6L10.4 8.2Q15 8.6 15.4 14.6Z"/></svg>
<svg style="left:1078.5px;top:226.5px" width="14" height="16" viewBox="0 0 14 16"><rect x="3.2" y="0.4" width="7.6" height="11.4" rx="3.8" fill="#fff"/><path d="M4.2 4.6H9.8V8Q9.8 10.8 7 10.8Q4.2 10.8 4.2 8Z" fill="#35c435"/><path d="M1 7.6Q1 13.4 7 13.4Q13 13.4 13 7.6" stroke="#fff" stroke-width="1.6" fill="none"/><rect x="5.8" y="13" width="2.4" height="2.6" fill="#fff"/></svg>
<div class="t" id="nmt">逯子森-中新天达</div>
<div class="t" id="rec">录制中</div>
</body>
</html>
